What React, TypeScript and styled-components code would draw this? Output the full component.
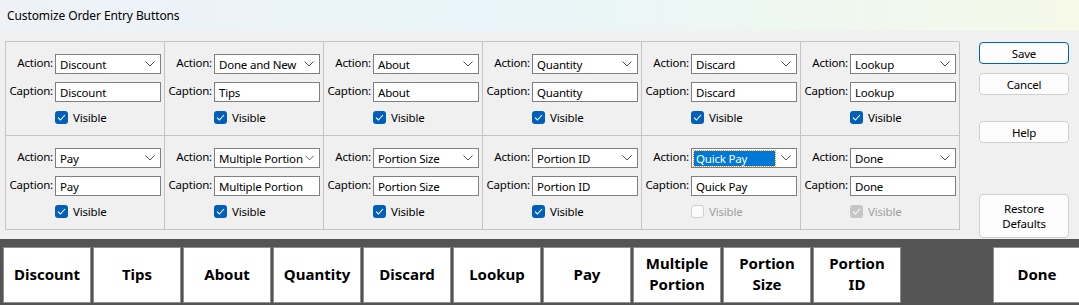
import styled, { createGlobalStyle, css } from 'styled-components';

const GlobalStyle = createGlobalStyle`
  html, body {
    margin: 0;
    padding: 0;
    width: 1079px;
    height: 305px;
    overflow: hidden;
    background: #f0f0f0;
  }
  * {
    box-sizing: border-box;
  }
`;

interface ISlot {
  action: string;
  caption: string;
  checked: boolean;
  disabled?: boolean;
  focused?: boolean;
}

const slots: ISlot[] = [
  { action: 'Discount', caption: 'Discount', checked: true },
  { action: 'Done and New', caption: 'Tips', checked: true },
  { action: 'About', caption: 'About', checked: true },
  { action: 'Quantity', caption: 'Quantity', checked: true },
  { action: 'Discard', caption: 'Discard', checked: true },
  { action: 'Lookup', caption: 'Lookup', checked: true },
  { action: 'Pay', caption: 'Pay', checked: true },
  { action: 'Multiple Portion', caption: 'Multiple Portion', checked: true },
  { action: 'Portion Size', caption: 'Portion Size', checked: true },
  { action: 'Portion ID', caption: 'Portion ID', checked: true },
  { action: 'Quick Pay', caption: 'Quick Pay', checked: false, disabled: true, focused: true },
  { action: 'Done', caption: 'Done', checked: true, disabled: true },
];

const tiles = [
  'Discount',
  'Tips',
  'About',
  'Quantity',
  'Discard',
  'Lookup',
  'Pay',
  'Multiple Portion',
  'Portion Size',
  'Portion ID',
  '',
  'Done',
];

function Chevron() {
  return (
    <svg width="10" height="6" viewBox="0 0 10 6">
      <path d="M0.5 0.5 L5 5 L9.5 0.5" fill="none" stroke="#505050" strokeWidth="1" />
    </svg>
  );
}

function Check() {
  return (
    <svg width="9" height="7" viewBox="0 0 9 7">
      <path d="M1 3.6 L3.4 6 L8 1" fill="none" stroke="#ffffff" strokeWidth="1.1" />
    </svg>
  );
}

export default function App() {
  return (
    <Window>
      <GlobalStyle />
      <TitleBar>Customize Order Entry Buttons</TitleBar>
      <Body>
        <SlotGrid>
          {slots.map((s, i) => (
            <Cell key={i}>
              <Label>Action:</Label>
              <Select>
                <SelectText $focused={s.focused}>{s.action}</SelectText>
                <Chevron />
              </Select>
              <Label>Caption:</Label>
              <TextBox>{s.caption}</TextBox>
              <CheckRow $disabled={s.disabled}>
                <Box $checked={s.checked} $disabled={s.disabled}>
                  {s.checked && <Check />}
                </Box>
                Visible
              </CheckRow>
            </Cell>
          ))}
        </SlotGrid>
        <SideButtons>
          <DialogButton $primary>Save</DialogButton>
          <DialogButton $gap={9}>Cancel</DialogButton>
          <DialogButton $gap={26}>Help</DialogButton>
          <DialogButton $gap={51} $tall>
            Restore
            <br />
            Defaults
          </DialogButton>
        </SideButtons>
      </Body>
      <Preview>
        {tiles.map((t, i) =>
          t ? <Tile key={i}>{t}</Tile> : <EmptyTile key={i} />
        )}
      </Preview>
    </Window>
  );
}

const Window = styled.div`
  width: 1079px;
  height: 305px;
  display: flex;
  flex-direction: column;
  font-family: 'Noto Sans', 'Open Sans', sans-serif;
  font-size: 11.5px;
  letter-spacing: -0.2px;
  color: #000;
  background: #f0f0f0;
  overflow: hidden;
`;

const TitleBar = styled.div`
  height: 31px;
  flex: none;
  display: flex;
  align-items: center;
  padding-left: 7px;
  padding-bottom: 1px;
  font-size: 12px;
  letter-spacing: -0.1px;
  background: linear-gradient(90deg, #eef2f7 0%, #e9f5fa 45%, #eef7f0 75%, #f6f9e8 100%);
`;

const Body = styled.div`
  height: 208px;
  flex: none;
  display: flex;
  padding: 10px 0 0 5px;
`;

const SlotGrid = styled.div`
  width: 954px;
  height: 189px;
  display: grid;
  grid-template-columns: repeat(6, 159px);
  grid-template-rows: repeat(2, 94px);
  border-top: 1px solid #c4c4c4;
  border-left: 1px solid #c4c4c4;
`;

const Cell = styled.div`
  display: grid;
  grid-template-columns: 1fr 106px;
  grid-template-rows: 20px 20px 14px;
  row-gap: 8px;
  column-gap: 2px;
  align-content: start;
  padding: 12px 3px 0 0;
  border-right: 1px solid #c4c4c4;
  border-bottom: 1px solid #c4c4c4;
`;

const Label = styled.div`
  text-align: right;
  line-height: 18px;
  white-space: nowrap;
`;

const fieldBox = css`
  height: 20px;
  background: #fff;
  border: 1px solid #7f7f7f;
  display: flex;
  align-items: center;
  white-space: nowrap;
  overflow: hidden;
`;

const Select = styled.div`
  ${fieldBox};
  justify-content: space-between;
  padding: 0 5px 0 2px;
`;

const SelectText = styled.span<{ $focused?: boolean }>`
  padding: 0 2px;
  line-height: 15px;
  ${(p) =>
    p.$focused &&
    css`
      flex: 1;
      margin-right: 6px;
      background: #0078d7;
      color: #fff;
      outline: 1px dotted #e0a030;
    `}
`;

const TextBox = styled.div`
  ${fieldBox};
  padding: 0 4px;
`;

const CheckRow = styled.div<{ $disabled?: boolean }>`
  grid-column: 2;
  display: flex;
  align-items: center;
  gap: 5px;
  padding-top: 1px;
  color: ${(p) => (p.$disabled ? '#a0a0a0' : '#000')};
`;

const Box = styled.span<{ $checked: boolean; $disabled?: boolean }>`
  width: 13px;
  height: 13px;
  border-radius: 3px;
  display: flex;
  align-items: center;
  justify-content: center;
  ${(p) =>
    p.$checked
      ? css`
          background: ${p.$disabled ? '#c6c6c6' : '#005fb8'};
        `
      : css`
          background: #fbfbfb;
          border: 1px solid #cfcfcf;
        `}
`;

const SideButtons = styled.div`
  display: flex;
  flex-direction: column;
  margin-left: 20px;
  padding-top: 1px;
`;

const DialogButton = styled.div<{ $primary?: boolean; $gap?: number; $tall?: boolean }>`
  width: 90px;
  height: ${(p) => (p.$tall ? '44px' : '22px')};
  margin-top: ${(p) => p.$gap ?? 0}px;
  display: flex;
  align-items: center;
  justify-content: center;
  text-align: center;
  line-height: 15px;
  background: #fdfdfd;
  border-radius: 4px;
  border: 1px solid ${(p) => (p.$primary ? '#005fb8' : '#d0d0d0')};
`;

const Preview = styled.div`
  flex: 1;
  background: #545454;
  display: flex;
  gap: 2px;
  padding: 8px 0 2px 3px;
`;

const Tile = styled.div`
  width: 88px;
  flex: none;
  background: #fff;
  border: 1px solid #8f8f8f;
  display: flex;
  align-items: center;
  justify-content: center;
  text-align: center;
  padding: 0 8px 2px;
  font-size: 15px;
  font-weight: 700;
  letter-spacing: 0;
  line-height: 21px;
`;

const EmptyTile = styled.div`
  width: 88px;
  flex: none;
`;
